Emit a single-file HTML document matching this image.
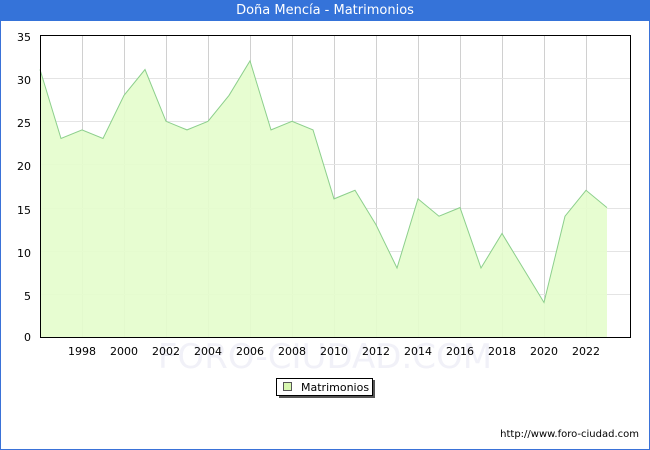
<!DOCTYPE html>
<html><head><meta charset="utf-8"><style>
body{margin:0;width:650px;height:450px;overflow:hidden;background:#fff;font-family:"DejaVu Sans","Liberation Sans",sans-serif;}
.frame{position:absolute;left:0;top:0;width:648px;height:448px;border:1px solid #3a72d8;}
.title{position:absolute;left:0;top:0;width:650px;height:21px;background:#3573d9;color:#fff;font-size:13px;text-align:center;line-height:22px;}
</style></head><body>
<div class="frame"></div>
<div class="title">Doña Mencía - Matrimonios</div>
<svg width="650" height="450" style="position:absolute;left:0;top:0" font-family="DejaVu Sans, Liberation Sans, sans-serif" font-size="11">
<text x="325" y="368" text-anchor="middle" font-size="34" fill="#f1f1f8">FORO-CIUDAD.COM</text>
<g stroke="#d0d0d0" stroke-width="1">
<line x1="82.5" y1="35" x2="82.5" y2="337"/><line x1="124.5" y1="35" x2="124.5" y2="337"/><line x1="166.5" y1="35" x2="166.5" y2="337"/><line x1="208.5" y1="35" x2="208.5" y2="337"/><line x1="250.5" y1="35" x2="250.5" y2="337"/><line x1="292.5" y1="35" x2="292.5" y2="337"/><line x1="334.5" y1="35" x2="334.5" y2="337"/><line x1="376.5" y1="35" x2="376.5" y2="337"/><line x1="418.5" y1="35" x2="418.5" y2="337"/><line x1="460.5" y1="35" x2="460.5" y2="337"/><line x1="502.5" y1="35" x2="502.5" y2="337"/><line x1="544.5" y1="35" x2="544.5" y2="337"/><line x1="586.5" y1="35" x2="586.5" y2="337"/>
</g>
<g stroke="#e4e4e4"><line x1="40" y1="78.5" x2="630" y2="78.5"/><line x1="40" y1="121.5" x2="630" y2="121.5"/><line x1="40" y1="164.5" x2="630" y2="164.5"/><line x1="40" y1="208.5" x2="630" y2="208.5"/><line x1="40" y1="251.5" x2="630" y2="251.5"/><line x1="40" y1="294.5" x2="630" y2="294.5"/></g>
<polygon fill="#e4fdcc" fill-opacity="0.9" points="40,337 40,69.5 61,138.5 82,129.9 103,138.5 124,95.4 145,69.5 166,121.3 187,129.9 208,121.3 229,95.4 250,60.9 271,129.9 292,121.3 313,129.9 334,198.9 355,190.3 376,224.8 397,268 418,198.9 439,216.2 460,207.6 481,268 502,233.5 523,268 544,302.5 565,216.2 586,190.3 607,207.6 607,337"/>
<polyline fill="none" stroke="#8ccf8c" stroke-width="1" points="40,69.5 61,138.5 82,129.9 103,138.5 124,95.4 145,69.5 166,121.3 187,129.9 208,121.3 229,95.4 250,60.9 271,129.9 292,121.3 313,129.9 334,198.9 355,190.3 376,224.8 397,268 418,198.9 439,216.2 460,207.6 481,268 502,233.5 523,268 544,302.5 565,216.2 586,190.3 607,207.6"/>
<rect x="40.5" y="35.5" width="590" height="302" fill="none" stroke="#000"/>
<g text-anchor="end" fill="#000"><text x="31" y="41">35</text><text x="31" y="84">30</text><text x="31" y="127">25</text><text x="31" y="170">20</text><text x="31" y="214">15</text><text x="31" y="257">10</text><text x="31" y="300">5</text><text x="31" y="341">0</text></g>
<g text-anchor="middle"><text x="82" y="355">1998</text><text x="124" y="355">2000</text><text x="166" y="355">2002</text><text x="208" y="355">2004</text><text x="250" y="355">2006</text><text x="292" y="355">2008</text><text x="334" y="355">2010</text><text x="376" y="355">2012</text><text x="418" y="355">2014</text><text x="460" y="355">2016</text><text x="502" y="355">2018</text><text x="544" y="355">2020</text><text x="586" y="355">2022</text></g>
<rect x="279" y="380" width="96" height="18" fill="#555"/>
<rect x="276.5" y="378.5" width="96" height="17" fill="#fff" stroke="#000"/>
<rect x="283.5" y="382.5" width="8" height="8" fill="#d8f8b0" stroke="#555"/>
<text x="301" y="391">Matrimonios</text>
<text x="639" y="437" text-anchor="end" font-size="10">http://www.foro-ciudad.com</text>
</svg>
</body></html>
